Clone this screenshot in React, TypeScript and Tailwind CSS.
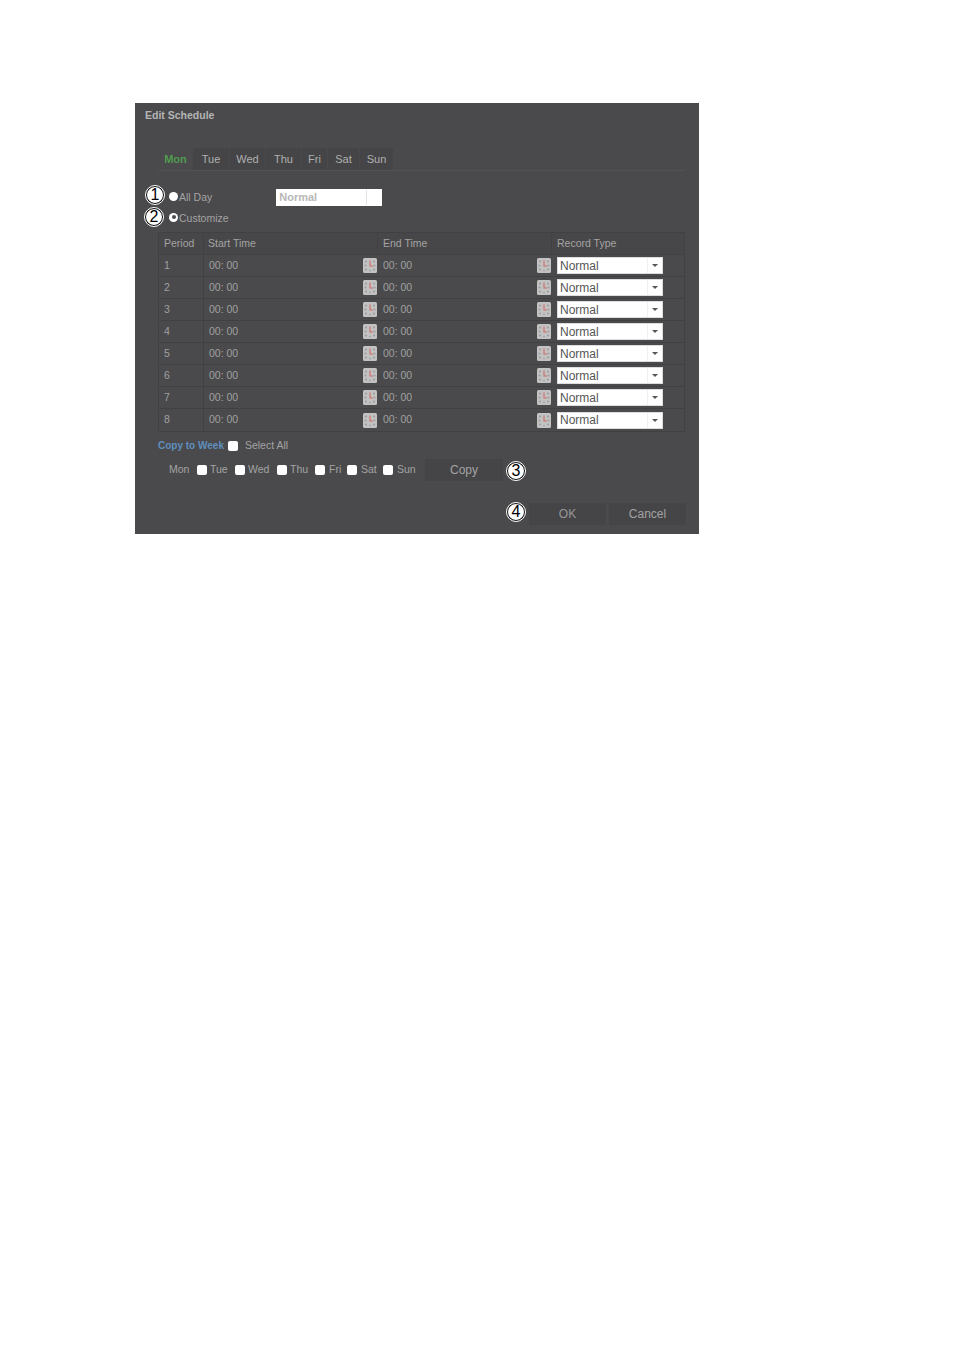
const days = ['Mon', 'Tue', 'Wed', 'Thu', 'Fri', 'Sat', 'Sun'];
const tabWidths = ['w-[33px]', 'w-[36px]', 'w-[35px]', 'w-[35px]', 'w-[25px]', 'w-[31px]', 'w-[33px]'];
const periods = [1, 2, 3, 4, 5, 6, 7, 8];

function Callout({ n, className }: { n: number; className: string }) {
  return (
    <span className={`absolute flex h-[18px] w-[18px] items-center justify-center rounded-full border-[1.5px] border-black bg-white text-[16px] leading-none text-black outline outline-1 outline-white ${className}`}>
      {n}
    </span>
  );
}

function ClockIcon() {
  return (
    <svg width="14" height="15" viewBox="0 0 14 15" className="shrink-0">
      <rect width="14" height="15" rx="1.5" fill="#c2c2c2" />
      <g fill="#9a9a9a">
        <circle cx="3" cy="3.5" r="1" />
        <circle cx="11" cy="3.5" r="1" />
        <circle cx="2.5" cy="7.5" r="1" />
        <circle cx="11.5" cy="7.5" r="1" />
        <circle cx="3" cy="11.5" r="1" />
        <circle cx="11" cy="11.5" r="1" />
        <circle cx="7" cy="12.5" r="0.8" />
      </g>
      <path d="M7 2.5V8H10" stroke="#cf6a66" strokeWidth="1.1" fill="none" />
    </svg>
  );
}

function Check({ className = '' }: { className?: string }) {
  return <span className={`h-[10px] w-[10px] shrink-0 rounded-[2px] bg-white ${className}`} />;
}

export default function App() {
  return (
    <div className="h-[1350px] bg-white pl-[135px] pt-[103px] font-['Liberation_Sans',Arial,sans-serif]">
      <div className="relative flex h-[431px] w-[564px] flex-col bg-[#4a4a4c] text-[10.5px] text-[#a3a3a3]">
        <div className="pl-[10px] pt-[6px] text-[10.5px] font-bold leading-[12px] text-[#b5b5b5]">Edit Schedule</div>

        {/* tabs */}
        <div className="ml-[23px] mr-[14px] mt-[27px] flex h-[23px] gap-px border-b border-[#525254] pl-px">
          {days.map((d, i) => (
            <div
              key={d}
              className={`flex h-[22px] items-center justify-center text-[11px] ${tabWidths[i]} ${i === 0 ? 'bg-[#4a4a4c] font-bold text-[#4f9a4f]' : 'bg-[#454547] text-[#b0b0b0]'}`}
            >
              {d}
            </div>
          ))}
        </div>

        {/* all day / customize */}
        <div className="relative ml-[34px] mt-[16px] flex h-[21px] items-center">
          <Callout n={1} className="-left-[23px] top-[-1px]" />
          <span className="mt-[-3px] h-[9px] w-[9px] rounded-full bg-white" />
          <span className="ml-px text-[#a3a3a3]">All Day</span>
          <div className="ml-[64px] flex h-[17px] w-[106px] items-center justify-between bg-white pl-[3px] text-[11px] font-bold text-[#b8b8b8]">
            Normal
            <span className="mr-[1px] h-[15px] w-[15px] border-l border-[#e4e4e4]" />
          </div>
        </div>
        <div className="relative ml-[34px] flex h-[21px] items-center">
          <Callout n={2} className="-left-[24px] top-[0px]" />
          <span className="mt-[-3px] flex h-[9px] w-[9px] items-center justify-center rounded-full bg-white">
            <span className="h-[4px] w-[4px] rounded-full bg-[#4a4a4c]" />
          </span>
          <span className="ml-px text-[#a3a3a3]">Customize</span>
        </div>

        {/* table */}
        <div className="ml-[23px] mr-[14px] mt-[3px] border border-[#414143]">
          <div className="grid h-[22px] grid-cols-[45px_174px_174px_1fr] items-center border-b border-[#414143] bg-[#474749] font-medium text-[#a3a3a3]">
            <span className="h-full border-r border-[#414143] pl-[5px] leading-[20px]">Period</span>
            <span className="h-full border-r border-[#414143] pl-[4px] leading-[20px]">Start Time</span>
            <span className="h-full border-r border-[#414143] pl-[5px] leading-[20px]">End Time</span>
            <span className="pl-[5px]">Record Type</span>
          </div>
          {periods.map(p => (
            <div key={p} className="grid h-[22px] grid-cols-[45px_174px_174px_1fr] items-center border-b border-[#414143] text-[#a0a0a0] last:border-b-0">
              <span className="flex h-full items-center border-r border-[#414143] pl-[5px]">{p}</span>
              <div className="flex h-full items-center justify-between pl-[5px] pr-[1px]">
                <span>00: 00</span>
                <ClockIcon />
              </div>
              <div className="flex h-full items-center justify-between pl-[5px] pr-[1px]">
                <span>00: 00</span>
                <ClockIcon />
              </div>
              <div className="flex h-full items-center pl-[5px]">
                <div className="flex h-[17px] w-[106px] items-center justify-between border border-[#dddddd] bg-white pl-[2px] text-[12px] text-[#555555]">
                  Normal
                  <span className="flex h-[15px] w-[15px] items-center justify-center border-l border-[#f0f0f0]">
                    <span className="h-0 w-0 border-x-[3px] border-t-[3px] border-x-transparent border-t-[#555555]" />
                  </span>
                </div>
              </div>
            </div>
          ))}
        </div>

        {/* copy to week */}
        <div className="ml-[23px] mt-[7px] flex h-[14px] items-center">
          <span className="-mt-[1px] text-[10px] font-bold text-[#5f8fbe]">Copy to Week</span>
          <Check className="ml-[4px]" />
          <span className="ml-[7px]">Select All</span>
        </div>
        <div className="relative ml-[34px] mt-[5px] flex h-[24px] items-center text-[#a3a3a3]">
          <span className="w-[28px]">Mon</span>
          <Check />
          <span className="ml-[3px] w-[25px]">Tue</span>
          <Check />
          <span className="ml-[3px] w-[29px]">Wed</span>
          <Check />
          <span className="ml-[3px] w-[25px]">Thu</span>
          <Check />
          <span className="ml-[4px] w-[18px]">Fri</span>
          <Check />
          <span className="ml-[4px] w-[22px]">Sat</span>
          <Check />
          <span className="ml-[4px] w-[28px]">Sun</span>
          <div className="flex h-[22px] w-[78px] items-center justify-center bg-[#454547] text-[12px] text-[#a3a3a3]">Copy</div>
          <Callout n={3} className="left-[338px] top-[4px]" />
        </div>

        {/* actions */}
        <div className="relative ml-auto mr-[13px] mt-[21px] flex gap-[3px] text-[12px] text-[#a3a3a3]">
          <Callout n={4} className="-left-[22px] top-[0px]" />
          <div className="flex h-[22px] w-[77px] items-center justify-center bg-[#454547] text-[#979797]">OK</div>
          <div className="flex h-[22px] w-[77px] items-center justify-center bg-[#454547]">Cancel</div>
        </div>
      </div>
    </div>
  );
}
